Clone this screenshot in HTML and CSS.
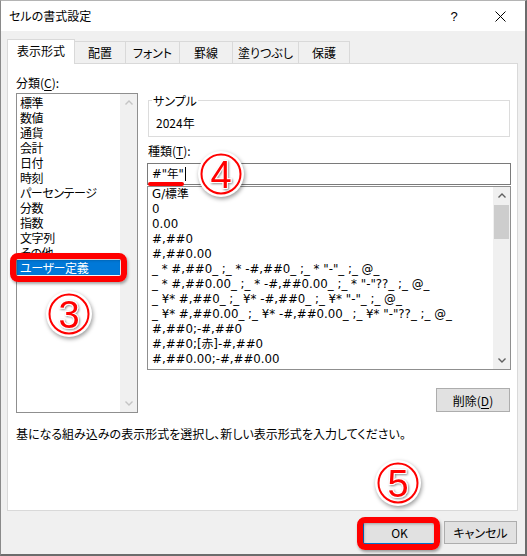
FILE: index.html
```html
<!DOCTYPE html>
<html lang="ja">
<head>
<meta charset="utf-8">
<title>セルの書式設定</title>
<link rel="stylesheet" href="styles.css">
</head>
<body>
<svg class="defs" width="0" height="0" aria-hidden="true">
  <defs>
    <filter id="digitShadow" x="-40%" y="-40%" width="180%" height="180%">
      <feDropShadow dx="1" dy="1" stdDeviation="1.3" flood-color="#000" flood-opacity="0.45"/>
    </filter>
  </defs>
</svg>
<div class="window">
  <div class="titlebar">
    <span class="title">セルの書式設定</span>
    <div class="title-buttons">
      <span class="tbtn help">?</span>
      <span class="tbtn close"><svg width="11" height="11" viewBox="0 0 11 11"><path d="M0.5 0.5 L10.5 10.5 M10.5 0.5 L0.5 10.5" stroke="#000" stroke-width="1" fill="none"/></svg></span>
    </div>
  </div>
  <div class="body">
    <div class="tabs">
      <div class="tab active tab-w68">表示形式</div>
      <div class="tab tab-w52">配置</div>
      <div class="tab tab-w55">フォント</div>
      <div class="tab tab-w54">罫線</div>
      <div class="tab tab-w67">塗りつぶし</div>
      <div class="tab tab-w52">保護</div>
    </div>
    <div class="panel">
      <div class="columns">
        <div class="cat-col">
          <div class="label">分類(<u>C</u>):</div>
          <div class="listbox cat-list">
            <ul class="items">
              <li>標準</li>
              <li>数値</li>
              <li>通貨</li>
              <li>会計</li>
              <li>日付</li>
              <li>時刻</li>
              <li>パーセンテージ</li>
              <li>分数</li>
              <li>指数</li>
              <li>文字列</li>
              <li>その他</li>
              <li class="selected">ユーザー定義</li>
            </ul>
            <div class="scrollbar disabled">
              <span class="arrow"><svg width="8" height="5" viewBox="0 0 8 5"><polyline points="0.5,4.5 4,1 7.5,4.5" fill="none" stroke="currentColor" stroke-width="1.4"/></svg></span>
              <span class="track"></span>
              <span class="arrow"><svg width="8" height="5" viewBox="0 0 8 5"><polyline points="0.5,0.5 4,4 7.5,0.5" fill="none" stroke="currentColor" stroke-width="1.4"/></svg></span>
            </div>
          </div>
        </div>
        <div class="fmt-col">
          <div class="sample">
            <div class="sample-legend">サンプル</div>
            <div class="sample-value">2024年</div>
          </div>
          <div class="label type-label">種類(<u>T</u>):</div>
          <div class="input"><span class="input-text">#"年"</span><span class="caret"></span></div>
          <div class="listbox fmt-list">
            <ul class="items">
              <li>G/標準</li>
              <li>0</li>
              <li>0.00</li>
              <li>#,##0</li>
              <li>#,##0.00</li>
              <li>_ * #,##0_ ;_ * -#,##0_ ;_ * "-"_ ;_ @_</li>
              <li>_ * #,##0.00_ ;_ * -#,##0.00_ ;_ * "-"??_ ;_ @_</li>
              <li>_ ¥* #,##0_ ;_ ¥* -#,##0_ ;_ ¥* "-"_ ;_ @_</li>
              <li>_ ¥* #,##0.00_ ;_ ¥* -#,##0.00_ ;_ ¥* "-"??_ ;_ @_</li>
              <li>#,##0;-#,##0</li>
              <li>#,##0;[赤]-#,##0</li>
              <li>#,##0.00;-#,##0.00</li>
            </ul>
            <div class="scrollbar">
              <span class="arrow"><svg width="8" height="5" viewBox="0 0 8 5"><polyline points="0.5,4.5 4,1 7.5,4.5" fill="none" stroke="currentColor" stroke-width="1.4"/></svg></span>
              <span class="track"><span class="thumb"></span></span>
              <span class="arrow"><svg width="8" height="5" viewBox="0 0 8 5"><polyline points="0.5,0.5 4,4 7.5,0.5" fill="none" stroke="currentColor" stroke-width="1.4"/></svg></span>
            </div>
          </div>
          <div class="delete-row"><button class="btn delete">削除(<u>D</u>)</button></div>
        </div>
      </div>
      <p class="desc">基になる組み込みの表示形式を選択し、新しい表示形式を入力してください。</p>
    </div>
    <div class="footer">
      <button class="btn ok">OK</button>
      <button class="btn cancel">キャンセル</button>
    </div>
  </div>

  <div class="mark frame frame-cat"></div>
  <div class="mark frame frame-ok"></div>
  <div class="mark underline-mark"></div>
  <div class="mark badge badge-3"><svg viewBox="0 0 46 46" width="46" height="46"><circle cx="23" cy="23" r="19.5" fill="none" stroke="#ff0000" stroke-width="2"/><text x="23" y="36.5" text-anchor="middle" class="badge-digit" filter="url(#digitShadow)">3</text></svg></div>
  <div class="mark badge badge-4"><svg viewBox="0 0 46 46" width="46" height="46"><circle cx="23" cy="23" r="19.5" fill="none" stroke="#ff0000" stroke-width="2"/><text x="23" y="36.5" text-anchor="middle" class="badge-digit" filter="url(#digitShadow)">4</text></svg></div>
  <div class="mark badge badge-5"><svg viewBox="0 0 46 46" width="46" height="46"><circle cx="23" cy="23" r="19.5" fill="none" stroke="#ff0000" stroke-width="2"/><text x="23" y="36.5" text-anchor="middle" class="badge-digit" filter="url(#digitShadow)">5</text></svg></div>
</div>
</body>
</html>
```
FILE: styles.css
```css
* { box-sizing: border-box; }
html, body { margin: 0; padding: 0; }
body {
  width: 527px;
  height: 556px;
  overflow: hidden;
  background: #ffffff;
  font-family: "Noto Sans CJK JP", "Noto Sans", sans-serif;
  font-size: 12px;
  color: #000;
  font-feature-settings: "palt";
}
.defs { position: absolute; width: 0; height: 0; }

.window {
  position: relative;
  width: 527px;
  height: 556px;
  border-top: 1px solid #b4b4b4;
  border-left: 1px solid #8a8a8a;
  border-right: 2px solid #6c6c6c;
  border-bottom: 2px solid #6c6c6c;
  background: #f0f0f0;
  display: flex;
  flex-direction: column;
}

/* title bar */
.titlebar {
  height: 30px;
  background: #ffffff;
  display: flex;
  align-items: center;
  justify-content: space-between;
  padding-left: 8px;
}
.title { line-height: 30px; }
.title-buttons { display: flex; margin-right: 2px; }
.tbtn {
  width: 46px;
  height: 30px;
  display: flex;
  align-items: center;
  justify-content: center;
}
.help { font-family: "Liberation Sans", sans-serif; font-size: 13px; }

/* body */
.body {
  flex: 1;
  display: flex;
  flex-direction: column;
  padding: 8px 0 0 6px;
}

.tabs {
  display: flex;
  align-items: flex-end;
  height: 24px;
}
.tab {
  height: 22px;
  line-height: 21px;
  text-align: center;
  border: 1px solid #d9d9d9;
  border-bottom: 0;
  background: #f0f0f0;
  margin-left: -1px;
  position: relative;
}
.tab:first-child { margin-left: 0; }
.tab.active {
  height: 25px;
  margin-bottom: -1px;
  background: #ffffff;
  z-index: 2;
  line-height: 21px;
}
.tab-w68 { width: 68px; }
.tab-w52 { width: 52px; }
.tab-w55 { width: 55px; }
.tab-w54 { width: 54px; }
.tab-w67 { width: 67px; }

.panel {
  width: 511px;
  height: 448px;
  background: #ffffff;
  border: 1px solid #d9d9d9;
  padding: 11px 0 0 8px;
  position: relative;
  z-index: 1;
}
.columns { display: flex; align-items: flex-start; }
.label { line-height: 15px; white-space: nowrap; }
u { text-decoration-thickness: 1px; text-underline-offset: 2px; }

.cat-col { width: 122px; }
.listbox {
  border: 1px solid #8f8f8f;
  background: #fff;
  display: flex;
}
.cat-list { margin-top: 3px; width: 122px; height: 320px; }
.items {
  list-style: none;
  margin: 0;
  padding: 1px 0 0 0;
  flex: 1;
  min-width: 0;
  overflow: hidden;
}
.items li {
  line-height: 15px;
  height: 15px;
  padding-left: 3px;
  white-space: nowrap;
}
.cat-list .items li { letter-spacing: -0.4px; }
.items li.selected { background: #0078d7; color: #fff; }

.scrollbar {
  width: 17px;
  background: #f0f0f0;
  display: flex;
  flex-direction: column;
  color: #606060;
}
.scrollbar.disabled { color: #c4c4c4; }
.arrow {
  height: 17px;
  display: flex;
  align-items: center;
  justify-content: center;
}
.arrow svg { display: block; }
.track { flex: 1; padding: 1px 1px 0 1px; }
.thumb { display: block; height: 34px; background: #cdcdcd; }

.fmt-col { margin-left: 9px; width: 364px; }
.sample {
  margin: 25px 0 0 1px;
  width: 362px;
  height: 37px;
  border: 1px solid #dcdcdc;
}
.sample-legend {
  width: fit-content;
  margin: -8px 0 0 3px;
  padding: 0 1px;
  line-height: 15px;
  background: #fff;
}
.sample-value { margin: 7px 0 0 7px; line-height: 15px; }
.type-label { margin: 6px 0 0 1px; }
.input {
  margin-top: 5px;
  height: 22px;
  border: 1px solid #7a7a7a;
  padding-left: 4px;
  line-height: 20px;
  display: flex;
  align-items: center;
}
.input-text { font-family: "DejaVu Sans", "Noto Sans CJK JP", sans-serif; font-size: 11.5px; }
.caret {
  display: inline-block;
  width: 1px;
  height: 14px;
  background: #000;
  margin-left: 1px;
}
.fmt-list { height: 184px; margin-top: 1px; }
.fmt-list .items { padding-top: 0; }
.fmt-list .items li {
  padding-left: 4px;
  font-family: "DejaVu Sans", "Noto Sans CJK JP", sans-serif;
  font-size: 11.8px;
  font-feature-settings: normal;
}

.delete-row { display: flex; justify-content: flex-end; margin-top: 18px; padding-right: 1px; }
.btn {
  font-family: inherit;
  font-size: 12px;
  color: #000;
  background: #e1e1e1;
  border: 1px solid #adadad;
  padding: 0;
  margin: 0;
  font-feature-settings: "palt";
}
.delete { width: 74px; height: 24px; }

.desc { margin: 13px 0 0 0; line-height: 15px; white-space: nowrap; }

.footer {
  display: flex;
  justify-content: flex-end;
  gap: 8px;
  margin-top: 10px;
  padding-right: 8px;
}
.ok, .cancel { width: 73px; height: 23px; }
.ok { border-color: #0078d7; }

/* annotations */
.mark { position: absolute; z-index: 5; }
.frame {
  border: 6px solid #ff0000;
  border-radius: 8px;
  box-shadow: 1px 2px 3px rgba(0,0,0,0.35), inset 1px 1px 3px rgba(0,0,0,0.3);
}
.frame-cat { left: 9px; top: 252px; width: 117px; height: 29px; }
.frame-ok { left: 356px; top: 516px; width: 83px; height: 33px; }
.underline-mark {
  left: 147px;
  top: 181px;
  width: 36px;
  height: 4px;
  border-radius: 2px;
  background: #ff0000;
}
.badge {
  width: 46px;
  height: 46px;
  border-radius: 50%;
  background: #fff;
  box-shadow: 1px 2px 4px rgba(0,0,0,0.4);
}
.badge svg { display: block; }
.badge-digit {
  font-family: "Liberation Sans", sans-serif;
  font-size: 38px;
  fill: #ff0000;
  stroke: #ffffff;
  stroke-width: 2px;
  paint-order: stroke;
}
.badge-3 { left: 45px; top: 290px; }
.badge-4 { left: 197px; top: 150px; }
.badge-5 { left: 374px; top: 459px; }
```
